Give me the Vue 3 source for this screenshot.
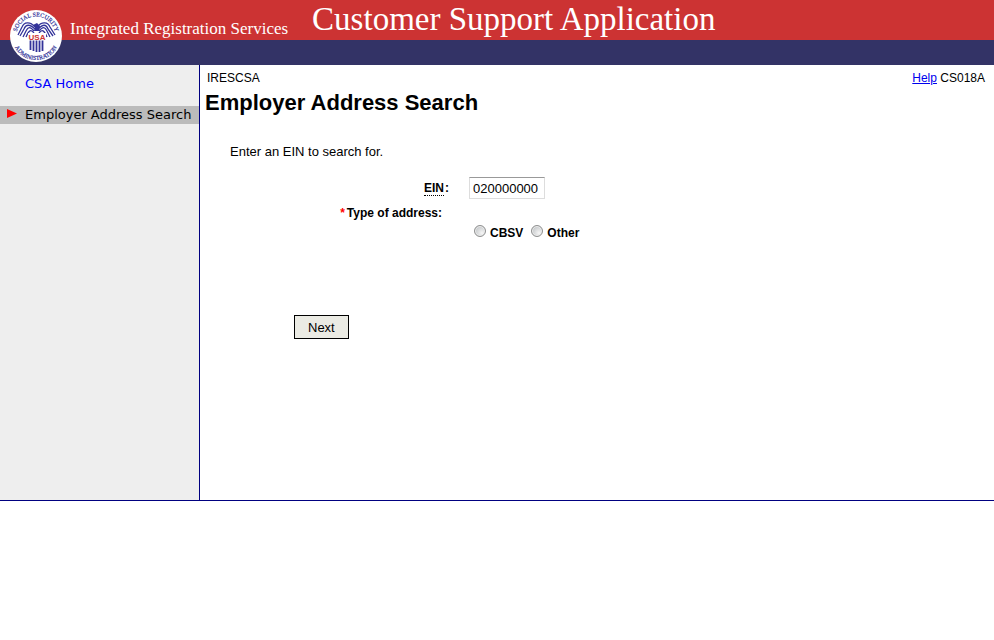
<script setup>
import { ref } from 'vue'

const ein = ref('020000000')
const addressType = ref('')

const addressTypes = [
  { value: 'cbsv', label: 'CBSV' },
  { value: 'other', label: 'Other' },
]
</script>

<template>
  <div class="page">
    <header class="banner">
      <svg class="seal" viewBox="0 0 54 54" role="img" aria-label="Social Security Administration">
        <defs>
          <path id="seal-top" d="M7.5 27 A19.5 19.5 0 0 1 46.5 27" />
          <path id="seal-bottom" d="M3 27 A24 24 0 0 0 51 27" />
        </defs>
        <circle cx="27" cy="27" r="26" fill="#fff" />
        <text class="seal-text">
          <textPath href="#seal-top" startOffset="50%" text-anchor="middle">SOCIAL SECURITY</textPath>
        </text>
        <text class="seal-text">
          <textPath href="#seal-bottom" startOffset="50%" text-anchor="middle">ADMINISTRATION</textPath>
        </text>
        <!-- eagle -->
        <g fill="none" stroke="#333399" stroke-width="1.3">
          <path d="M26 18 C21 12 15 13 13 18 L9 26" />
          <path d="M26 20 C21 15 17 15 15 20 L11 27" />
          <path d="M25 22 C21 17 19 18 17 22 L14 28" />
          <path d="M25 24 C22 20 20 21 17 28" />
          <path d="M28 18 C33 12 39 13 41 18 L46 26" />
          <path d="M29 20 C34 15 37 15 39 20 L44 27" />
          <path d="M30 22 C34 17 36 18 38 22 L41 28" />
          <path d="M30 24 C33 20 35 21 38 28" />
        </g>
        <path d="M24 16 L28 14 L31 17 L30 22 L25 22 L26 18 Z" fill="#333399" />
        <!-- shield -->
        <path d="M19 24 H37 V41 Q34 44 28 44 Q21 44 19 41 Z" fill="#fff" />
        <path
          d="M21.5 31.5 V41 M24.5 31.5 V42 M27.5 31.5 V43 M30.5 31.5 V43 M33.5 31.5 V42"
          fill="none" stroke="#333399" stroke-width="1.8"
        />
        <text class="seal-usa" x="28" y="31" text-anchor="middle">USA</text>
      </svg>
      <span class="service">Integrated Registration Services</span>
      <span class="app-name">Customer Support Application</span>
    </header>

    <div class="body">
      <nav class="sidebar">
        <a class="nav-item" href="#">CSA Home</a>
        <div class="nav-item current" aria-current="page">
          <svg class="arrow" viewBox="0 0 10 9" aria-hidden="true"><path d="M0 0 L10 4.5 L0 9 Z" fill="#f00" /></svg>
          Employer Address Search
        </div>
      </nav>

      <main class="content">
        <div class="topline">
          <span>IRESCSA</span>
          <span><a href="#">Help</a> CS018A</span>
        </div>
        <h1>Employer Address Search</h1>
        <p class="intro">Enter an EIN to search for.</p>

        <form @submit.prevent>
          <div class="fields">
            <label class="label" for="ein"><abbr title="Employer Identification Number">EIN</abbr>:</label>
            <input id="ein" v-model="ein" class="ein" type="text" maxlength="9">
          </div>

          <div role="radiogroup" aria-labelledby="type-label">
            <div id="type-label" class="label type-label"><span class="required">*</span>Type of address:</div>
            <div class="radios">
              <label v-for="t in addressTypes" :key="t.value" class="radio">
                <input v-model="addressType" type="radio" name="addressType" :value="t.value">
                {{ t.label }}
              </label>
            </div>
          </div>

          <button class="next" type="submit">Next</button>
        </form>
      </main>
    </div>
  </div>
</template>

<style>
body { background: #fff; }
</style>

<style scoped>
.page {
  font-family: "Liberation Sans", Arial, sans-serif;
  font-size: 12px;
  color: #000;
}

/* banner */
.banner {
  display: flex;
  align-items: flex-start;
  height: 65px;
  background: linear-gradient(#cc3333 40px, #333366 40px);
  color: #fff;
  font-family: "Liberation Serif", Georgia, serif;
  white-space: nowrap;
}

.seal { flex: none; width: 54px; height: 54px; margin: 9px 7px 0 9px; }
.seal-text { font: 6px "Liberation Serif", serif; fill: #333399; stroke: #333399; stroke-width: 0.2; }
.seal-usa { font: bold 8px "Liberation Sans", sans-serif; fill: #cc3333; }

.service { margin-top: 18px; font-size: 17px; line-height: 22px; }
.app-name { margin: 1px 0 0 24px; font-size: 33px; line-height: 36px; }

/* columns */
.body { display: flex; border-bottom: 1px solid #000080; }

.sidebar {
  flex: none;
  box-sizing: border-box;
  width: 200px;
  padding-top: 10px;
  background: #eeeeee;
  border-right: 1px solid #000080;
  font-family: "DejaVu Sans", Verdana, sans-serif;
  font-size: 13px;
}

.nav-item {
  display: block;
  padding-left: 25px;
  line-height: 18px;
  color: #0000ff;
  text-decoration: none;
  white-space: nowrap;
}

.nav-item.current {
  display: flex;
  margin-top: 13px;
  padding-left: 7px;
  background: #bbbbbb;
  color: #000;
}

.arrow { width: 10px; height: 9px; margin: 3px 8px 0 0; }

.content { flex: 1; min-width: 0; padding: 5px 9px 161px 5px; }

.topline { display: flex; justify-content: space-between; padding-left: 2px; line-height: 16px; }
.topline a { color: #0000ee; }

h1 { margin: 3px 0 0; font-size: 22px; line-height: 28px; }

.intro { margin: 26px 0 0 25px; font-size: 13px; line-height: 18px; }

/* form */
.fields { display: flex; align-items: center; gap: 20px; margin-top: 16px; }

.label { box-sizing: border-box; width: 244px; text-align: right; font-weight: bold; line-height: 16px; }
.label abbr { margin-right: 1px; text-decoration: none; border-bottom: 1px dotted #000; }

.ein {
  box-sizing: border-box;
  width: 76px;
  height: 22px;
  padding: 0 3px;
  border: 1px solid #dddddd;
  border-top-color: #999999;
  font: 13px "Liberation Sans", Arial, sans-serif;
}

.type-label { margin-top: 6px; padding-right: 7px; }
.required { margin-right: 2px; color: #ff0000; }

.radios { display: flex; gap: 8px; margin: 4px 0 0 269px; }
.radio { display: flex; gap: 4px; font-weight: bold; line-height: 16px; }

.radio input {
  appearance: none;
  box-sizing: border-box;
  width: 12px;
  height: 12px;
  margin: 0;
  border: 1px solid #8e8f8f;
  border-radius: 50%;
  background: radial-gradient(circle at 70% 70%, #f6f6f6, #b4b8bb);
  box-shadow: inset 0 0 0 1px #eeeeee;
}
.radio input:checked { background: radial-gradient(circle, #1d4f73 35%, #dddddd 40%); }

.next {
  display: block;
  box-sizing: border-box;
  margin: 74px 0 0 89px;
  padding: 0 13px;
  height: 24px;
  border: 1px solid #000;
  background: #ebebe4;
  color: #000;
  font: 13px "Liberation Sans", Arial, sans-serif;
}
</style>
